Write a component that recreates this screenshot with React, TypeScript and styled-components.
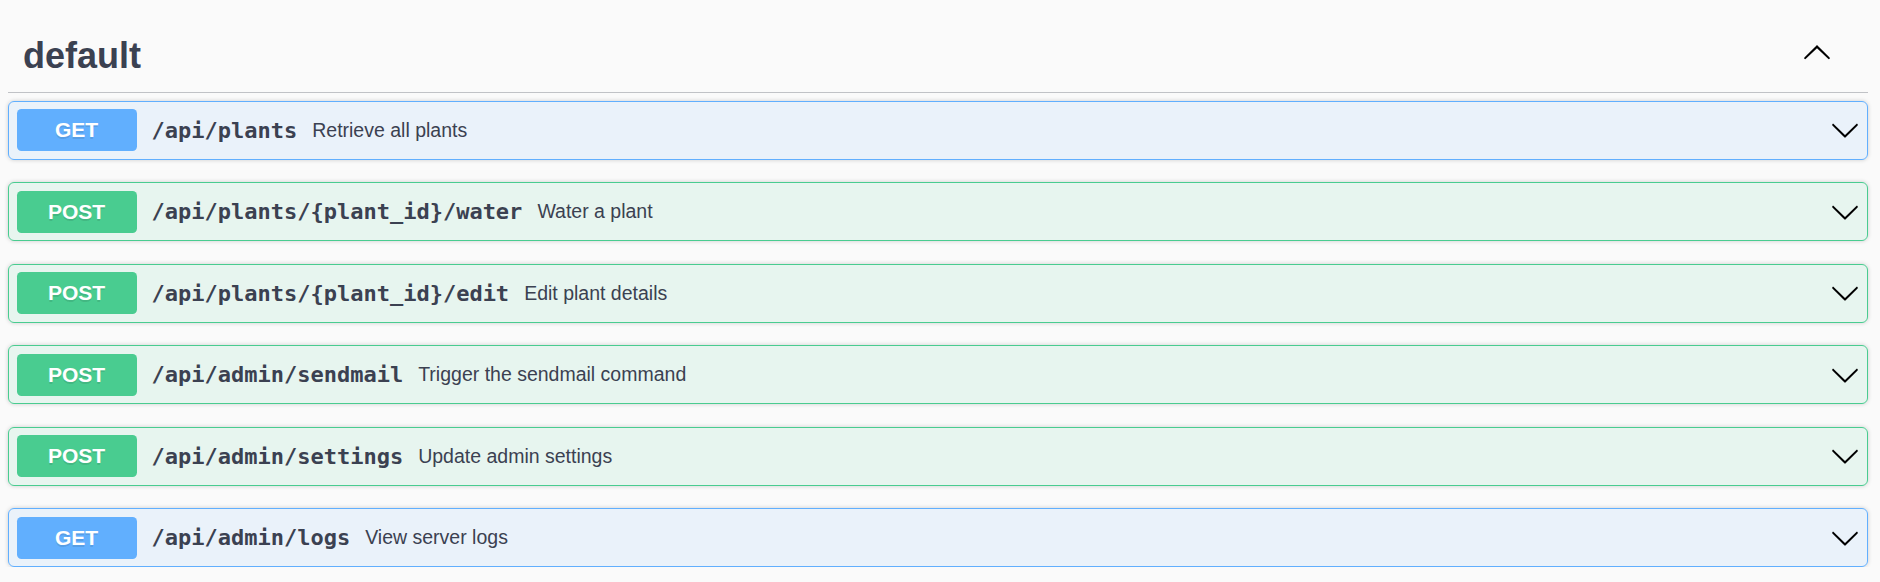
import React from "react";
import styled, { createGlobalStyle } from "styled-components";

const GlobalStyle = createGlobalStyle`
  html, body {
    margin: 0;
    padding: 0;
    background: #fafafa;
  }
  body {
    font-family: "Liberation Sans", Arial, sans-serif;
    color: #3b4151;
  }
`;

type Method = "get" | "post";

const methodColors: Record<Method, { main: string; bg: string }> = {
  get: { main: "#61affe", bg: "rgba(97, 175, 254, 0.1)" },
  post: { main: "#49cc90", bg: "rgba(73, 204, 144, 0.1)" },
};

const Page = styled.div`
  padding: 16px 12px 0 8px;
`;

const TagHeader = styled.h3`
  margin: 0 0 7.5px;
  padding: 16px 36px 12px 15px;
  display: flex;
  align-items: center;
  border-bottom: 1px solid rgba(59, 65, 81, 0.3);
`;

const TagName = styled.span`
  flex: 1;
  font-family: "Liberation Sans", Arial, sans-serif;
  font-size: 36px;
  font-weight: 700;
  line-height: 48px;
  color: #3b4151;
`;

const IconButton = styled.button<{ $lift?: number }>`
  display: flex;
  align-items: center;
  justify-content: center;
  padding: 0;
  border: none;
  background: none;
  width: 30px;
  height: 30px;
  margin-bottom: ${(p) => (p.$lift ? p.$lift * 2 : 0)}px;
  cursor: pointer;
`;

const List = styled.div`
  display: flex;
  flex-direction: column;
  gap: 22.5px;
`;

const Block = styled.div<{ $method: Method }>`
  border: 1px solid ${(p) => methodColors[p.$method].main};
  background: ${(p) => methodColors[p.$method].bg};
  border-radius: 6px;
  box-shadow: 0 0 4.5px rgba(0, 0, 0, 0.19);
`;

const Summary = styled.div`
  display: flex;
  align-items: center;
  padding: 7.5px;
`;

const Badge = styled.span<{ $method: Method }>`
  display: flex;
  align-items: center;
  justify-content: center;
  min-width: 120px;
  height: 42px;
  border-radius: 4.5px;
  background: ${(p) => methodColors[p.$method].main};
  color: #fff;
  font-family: "Liberation Sans", Arial, sans-serif;
  font-size: 21px;
  font-weight: 700;
  text-shadow: 0 1.5px 0 rgba(0, 0, 0, 0.1);
`;

const Path = styled.span`
  padding: 0 15px;
  font-family: "DejaVu Sans Mono", "Liberation Mono", monospace;
  font-size: 22px;
  font-weight: 700;
  color: #3b4151;
`;

const Description = styled.span`
  flex: 1;
  font-family: "Liberation Sans", Arial, sans-serif;
  font-size: 19.5px;
  color: #3b4151;
`;

const Chevron: React.FC<{ up?: boolean }> = ({ up }) => (
  <svg
    width="30"
    height="30"
    viewBox="0 0 20 20"
    style={up ? { transform: "rotate(180deg)" } : undefined}
  >
    <path
      fill="#000"
      d="M17.418 6.109c.272-.268.709-.268.979 0s.271.701 0 .969l-7.908 7.83c-.27.268-.707.268-.979 0l-7.908-7.83c-.27-.268-.27-.701 0-.969.271-.268.709-.268.979 0L10 13.25l7.418-7.141z"
    />
  </svg>
);

const ops: { method: Method; path: string; desc: string }[] = [
  { method: "get", path: "/api/plants", desc: "Retrieve all plants" },
  { method: "post", path: "/api/plants/{plant_id}/water", desc: "Water a plant" },
  { method: "post", path: "/api/plants/{plant_id}/edit", desc: "Edit plant details" },
  { method: "post", path: "/api/admin/sendmail", desc: "Trigger the sendmail command" },
  { method: "post", path: "/api/admin/settings", desc: "Update admin settings" },
  { method: "get", path: "/api/admin/logs", desc: "View server logs" },
];

export default function App() {
  return (
    <>
      <GlobalStyle />
      <Page>
        <TagHeader>
          <TagName>default</TagName>
          <IconButton $lift={3} aria-label="collapse">
            <Chevron up />
          </IconButton>
        </TagHeader>
        <List>
          {ops.map((op) => (
            <Block key={op.path} $method={op.method}>
              <Summary>
                <Badge $method={op.method}>{op.method.toUpperCase()}</Badge>
                <Path>{op.path}</Path>
                <Description>{op.desc}</Description>
                <IconButton aria-label="expand">
                  <Chevron />
                </IconButton>
              </Summary>
            </Block>
          ))}
        </List>
      </Page>
    </>
  );
}
